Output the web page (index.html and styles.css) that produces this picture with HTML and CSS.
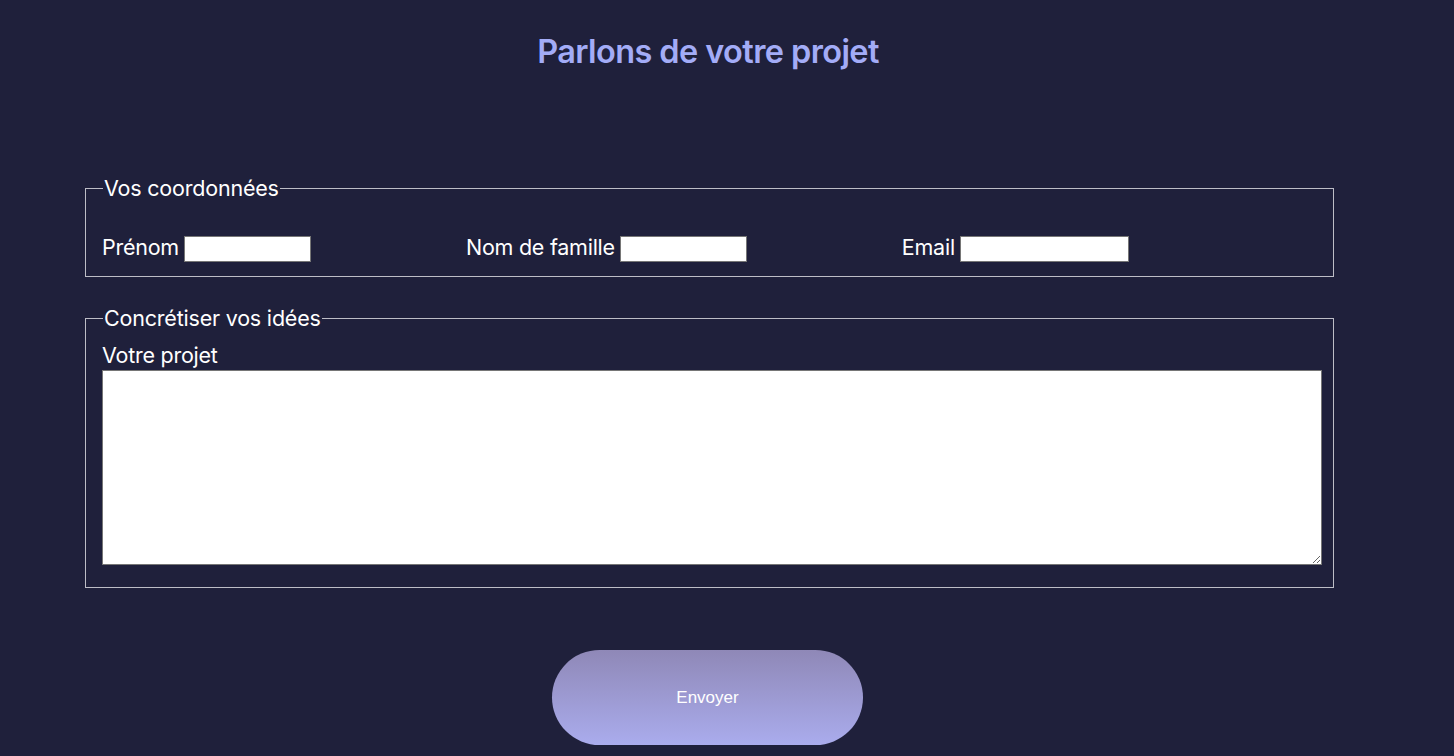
FILE: index.html
```html
<!DOCTYPE html>
<html lang="fr">
<head>
<meta charset="utf-8">
<title>Parlons de votre projet</title>
<link rel="stylesheet" href="styles.css">
</head>
<body>
<main class="page">
  <h1 class="title">Parlons de votre projet</h1>
  <form class="form">
    <fieldset class="group group-contact">
      <legend class="legend">Vos coordonnées</legend>
      <div class="row">
        <label class="field">Prénom <input class="input input-sm" type="text"></label>
        <label class="field">Nom de famille <input class="input input-sm" type="text"></label>
        <label class="field">Email <input class="input input-lg" type="email"></label>
      </div>
    </fieldset>
    <fieldset class="group group-project">
      <legend class="legend">Concrétiser vos idées</legend>
      <label class="block-label" for="projet">Votre projet</label>
      <textarea id="projet" class="textarea"></textarea>
    </fieldset>
    <div class="actions">
      <button class="btn" type="button">Envoyer</button>
    </div>
  </form>
</main>
</body>
</html>
```

FILE: styles.css
```css
* { box-sizing: border-box; }
html, body { margin: 0; padding: 0; }
body {
  background: #1f203b;
  color: #ffffff;
  font-family: Inter, "Noto Sans", sans-serif;
  height: 756px;
  overflow: hidden;
}
.page { padding-top: 30px; }
.title {
  margin: 0;
  text-align: center;
  font-size: 32.5px;
  font-weight: 600;
  letter-spacing: -0.6px;
  color: #a3acf7;
  line-height: 44px;
  padding-right: 38px;
}
.form {
  margin-left: 85px;
  width: 1249px;
  margin-top: 102px;
}
.group {
  border: 1px solid #bdbdc6;
  margin: 0;
  padding: 0 11px 0 16px;
}
.legend {
  font-size: 21.5px;
  padding: 0 1px;
  margin-left: 1px;
  line-height: 24px;
  letter-spacing: -0.2px;
}
.group-contact { height: 101px; padding-top: 32px; }
.row {
  display: flex;
  gap: 155px;
  align-items: center;
}
.field {
  font-size: 21.5px;
  letter-spacing: -0.25px;
  display: flex;
  align-items: center;
  gap: 5px;
}
.input {
  height: 26px;
  border: 1px solid #767676;
  background: #fff;
  margin: 0;
  padding: 0;
  margin-top: 4px;
}
.input-sm { width: 127px; }
.input-lg { width: 169px; }
.group-project {
  margin-top: 29px;
  height: 282px;
}
.block-label {
  display: block;
  font-size: 21.5px;
  letter-spacing: -0.25px;
  line-height: 24px;
  margin-top: 13px;
}
.textarea {
  display: block;
  width: 1220px;
  height: 195px;
  border: 1px solid #767676;
  background: #fff;
  margin: 3px 0 0 0;
  padding: 0;
}
.actions {
  display: flex;
  justify-content: center;
  margin-top: 62px;
  padding-right: 4px;
}
.btn {
  width: 311px;
  height: 95px;
  border: none;
  border-radius: 48px;
  background: linear-gradient(to bottom, #8f88b7, #aaaced);
  color: #ffffff;
  font-family: "Liberation Sans", Arial, sans-serif;
  font-size: 17px;
}
```
